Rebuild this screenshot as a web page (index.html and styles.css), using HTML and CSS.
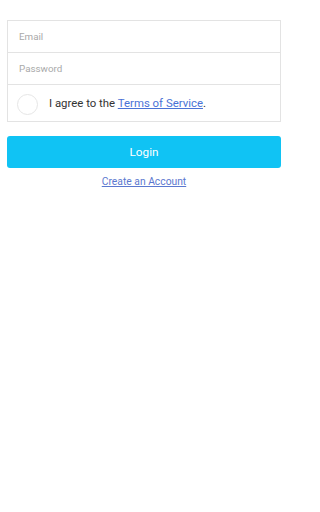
FILE: index.html
```html
<!DOCTYPE html>
<html>
<head>
<meta charset="utf-8">
<link rel="stylesheet" href="styles.css">
</head>
<body>
<div class="page">
  <div class="form">
    <div class="row field"><span class="placeholder">Email</span></div>
    <div class="row field"><span class="placeholder">Password</span></div>
    <div class="row check">
      <span class="circle"></span>
      <span class="agree">I agree to the <a class="link" href="#">Terms of Service</a>.</span>
    </div>
  </div>
  <button class="login">Login</button>
  <div class="create"><a class="link small" href="#">Create an Account</a></div>
</div>
</body>
</html>
```
FILE: styles.css
```css
html, body {
  margin: 0;
  padding: 0;
  background: #ffffff;
}
body {
  font-family: Roboto, "Liberation Sans", sans-serif;
  width: 288px;
  height: 512px;
}
.page {
  padding: 20px 7px 0 7px;
  display: flex;
  flex-direction: column;
}
.form {
  border: 1px solid #e3e3e3;
  display: flex;
  flex-direction: column;
}
.row {
  display: flex;
  align-items: center;
}
.field {
  height: 31px;
  border-bottom: 1px solid #e3e3e3;
  padding-left: 11px;
}
.placeholder {
  font-size: 9.8px;
  color: #a9a9a9;
}
.check {
  height: 36px;
  padding-left: 9px;
  gap: 11px;
}
.circle {
  width: 19px;
  height: 19px;
  border: 1px solid #e6e6e6;
  border-radius: 50%;
  margin-top: 2px;
}
.agree {
  font-size: 11.4px;
  color: #333333;
}
.link {
  color: #4a72d6;
  text-decoration: underline;
}
.login {
  margin-top: 14px;
  height: 32px;
  border: none;
  border-radius: 3px;
  background: #10c3f4;
  color: #ffffff;
  font-family: Roboto, "Liberation Sans", sans-serif;
  font-size: 11.8px;
  padding: 0;
}
.create {
  margin-top: 6px;
  text-align: center;
  line-height: 12px;
}
.small {
  font-size: 10.3px;
  color: #5b78cf;
}
```
